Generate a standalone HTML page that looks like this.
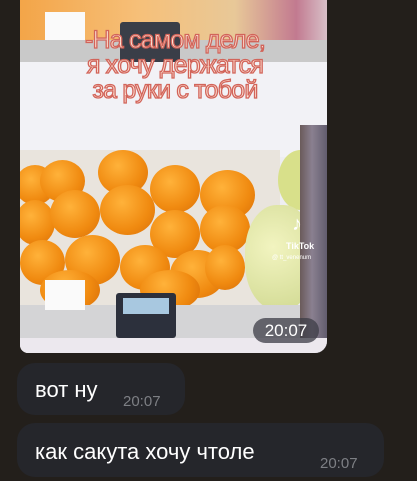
<!DOCTYPE html>
<html><head><meta charset="utf-8"><style>
*{margin:0;padding:0;box-sizing:border-box}
body{width:417px;height:481px;background:#231f1b;overflow:hidden;position:relative;font-family:"Liberation Sans",sans-serif}
.img{position:absolute;left:20px;top:0;width:307px;height:353px;border-radius:0 0 12px 8px;overflow:hidden;background:#eeeef2}
.a{position:absolute}
.o{position:absolute;border-radius:50%;background:radial-gradient(circle at 40% 35%,#ffb23a,#f08a10 60%,#d86e08)}
.cap{position:absolute;left:20px;top:28px;width:270px;text-align:center;font-size:25px;line-height:25px;color:#fde4d6;-webkit-text-stroke:1.3px #d2645a;letter-spacing:-0.8px}
.b{position:absolute;background:#25262b;border-radius:18px;color:#fff;font-size:22px}
.t{color:#7d7f84;font-size:15px}
</style></head><body>
<div class="img">
 <div class="a" style="left:0;top:0;width:307px;height:45px;background:linear-gradient(90deg,#f3a548,#f6c07a 40%,#e8c898 70%,#c27a90 90%,#d8c0c8)"></div>
 <div class="a" style="left:0;top:40px;width:307px;height:22px;background:#c9c9c9"></div>
 <div class="a" style="left:100px;top:22px;width:60px;height:40px;background:#3a3e48;border-radius:3px"></div>
 <div class="a" style="left:0;top:62px;width:307px;height:95px;background:#f2f2f6"></div>
 <div class="a" style="left:0;top:150px;width:260px;height:160px;background:#e9e4dd"></div>
 <div class="o" style="left:-5px;top:165px;width:40px;height:40px"></div>
 <div class="o" style="left:20px;top:160px;width:45px;height:42px"></div>
 <div class="o" style="left:78px;top:150px;width:50px;height:45px"></div>
 <div class="o" style="left:130px;top:165px;width:50px;height:48px"></div>
 <div class="o" style="left:180px;top:170px;width:55px;height:50px"></div>
 <div class="o" style="left:-5px;top:200px;width:40px;height:45px"></div>
 <div class="o" style="left:30px;top:190px;width:50px;height:48px"></div>
 <div class="o" style="left:80px;top:185px;width:55px;height:50px"></div>
 <div class="o" style="left:130px;top:210px;width:50px;height:48px"></div>
 <div class="o" style="left:180px;top:205px;width:50px;height:48px"></div>
 <div class="o" style="left:0;top:240px;width:45px;height:45px"></div>
 <div class="o" style="left:45px;top:235px;width:55px;height:50px"></div>
 <div class="o" style="left:100px;top:245px;width:50px;height:45px"></div>
 <div class="o" style="left:150px;top:250px;width:55px;height:48px"></div>
 <div class="o" style="left:185px;top:245px;width:40px;height:45px"></div>
 <div class="o" style="left:20px;top:270px;width:60px;height:40px"></div>
 <div class="o" style="left:120px;top:270px;width:60px;height:40px"></div>
 <div class="a" style="left:258px;top:150px;width:45px;height:60px;border-radius:50%;background:#d8e08a"></div>
 <div class="a" style="left:225px;top:205px;width:70px;height:105px;border-radius:45%;background:radial-gradient(circle at 40% 40%,#f2f4c0,#cfd890)"></div>
 <div class="a" style="left:280px;top:125px;width:30px;height:240px;background:linear-gradient(90deg,#6a5a5a,#8a8090 40%,#5a5668)"></div>
 <div class="a" style="left:0;top:305px;width:280px;height:35px;background:#d4d4d6"></div>
 <div class="a" style="left:0;top:338px;width:307px;height:15px;background:#ece8ee"></div>
 <div class="a" style="left:96px;top:293px;width:60px;height:45px;background:#2c303c;border-radius:3px"></div>
 <div class="a" style="left:103px;top:298px;width:46px;height:16px;background:#a8c8e0"></div>
 <div class="a" style="left:25px;top:280px;width:40px;height:30px;background:#fafafa"></div>
 <div class="a" style="left:25px;top:12px;width:40px;height:28px;background:#fafafa"></div>
 <div class="cap">-На самом деле,<br>я хочу держатся<br>за руки с тобой</div>
 <div class="a" style="left:272px;top:213px;color:#fff;font-size:20px;font-weight:bold">♪</div>
 <div class="a" style="left:266px;top:241px;color:#fff;font-size:9px;font-weight:bold">TikTok</div>
 <div class="a" style="left:252px;top:255px;color:#fff;font-size:6px">@ tt_venenum</div>
 <div class="a" style="left:233px;top:318px;width:66px;height:25px;border-radius:13px;background:rgba(60,60,70,.75);color:#fff;font-size:17px;line-height:25px;text-align:center">20:07</div>
</div>
<div class="b" style="left:17px;top:363px;width:168px;height:52px"><span class="a" style="left:18px;top:14px">вот ну</span><span class="a t" style="left:106px;top:30px">20:07</span></div>
<div class="b" style="left:17px;top:423px;width:367px;height:54px"><span class="a" style="left:18px;top:16px">как сакута хочу чтоле</span><span class="a t" style="left:303px;top:32px">20:07</span></div>
</body></html>
